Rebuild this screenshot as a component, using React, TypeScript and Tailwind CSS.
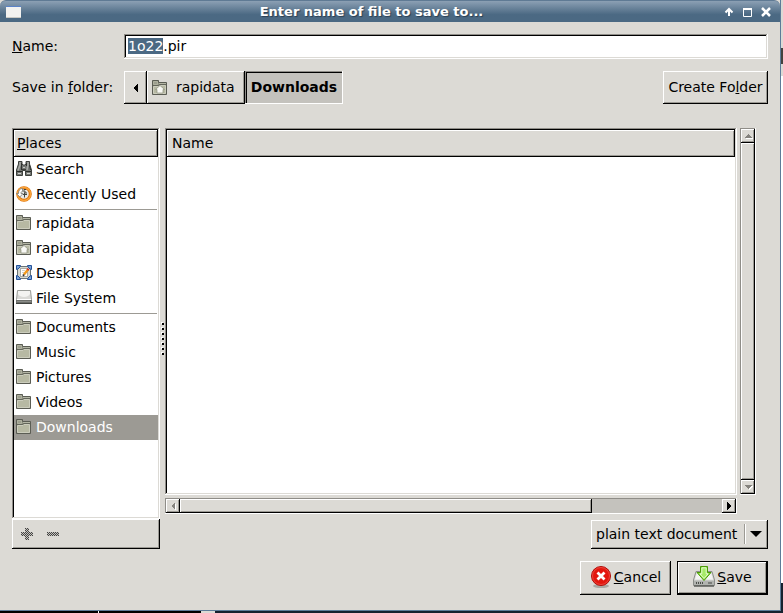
import { useEffect, useRef, useState } from 'react';
import type { ReactNode } from 'react';

const raised = "bg-[#dcdad5] shadow-[inset_-1px_-1px_0_#000,inset_1px_1px_0_#fff,inset_-2px_-2px_0_#9c9a94]";
const sunken = "shadow-[inset_-1px_-1px_0_#fff,inset_1px_1px_0_#8f8d88,inset_-2px_-2px_0_#dcdad5,inset_2px_2px_0_#000]";
const trough = "bg-[#c4c2bd] p-px shadow-[inset_-1px_-1px_0_#fff,inset_1px_1px_0_#8f8d88]";

function FolderIcon({ home = false }: { home?: boolean }) {
    return (
        <svg width="16" height="16" viewBox="0 0 16 16" className="shrink-0" aria-hidden="true">
            <path d="M.5 14.5V.5H6.5V2.5H14.5V14.5Z" fill="#8b8d7e" stroke="#5b5d54" />
            <path d="M1.5 1.5H5.5V4.500H1.500Z" fill="#9c9e8d" stroke="#aeb09f" />
            <path d="M7 3.500H14" stroke="#b4b6a5" />
            <path d="M1 5.500H6.500L7.500 4.500H14" stroke="#64665b" fill="none" />
            <path d="M1.500 13.500V6.500H7L8 5.500H13.500V13.500Z" fill="#b7b9a3" stroke="#cccdbd" />
            {home && <path d="M8 5.500L12.500 9.500H11V13H5V9.500H3.500Z" fill="#f9f9f5" stroke="#8e907f" strokeWidth=".7" />}
        </svg>
    );
}

function SearchIcon() {
    return (
        <svg width="16" height="16" viewBox="0 0 16 16" className="shrink-0" aria-hidden="true">
            <path d="M2.500 .5H6V3L7 4H9L10 3V.5H13.500V3L15.500 9V14.500H9.500V9.500H6.500V14.500H.5V9L2.500 3Z" fill="#747774" stroke="#3d403d" />
            <path d="M4 1V4L2 9.500M12 1V4L11 9" stroke="#a9aca8" strokeWidth="1.500" fill="none" />
            <path d="M5.500 2V9M10.500 2V5M13.500 4L14.500 9" stroke="#303330" />
            <path d="M1 10.500H6M10 10.500H15" stroke="#292c29" />
            <path d="M2 12.500H5M11 12.500H14" stroke="#d0d2cd" />
            <path d="M7 6.500H9" stroke="#c6c8c4" />
            <path d="M6 8.500H10" stroke="#3d403d" />
        </svg>
    );
}

function RecentIcon() {
    return (
        <svg width="16" height="16" viewBox="0 0 16 16" className="shrink-0" aria-hidden="true">
            <circle cx="8" cy="8" r="6.300" fill="#e9e9e6" stroke="#dc7208" strokeWidth="3" />
            <circle cx="8" cy="8" r="6.500" fill="none" stroke="#fba43a" strokeWidth="1.500" />
            <path d="M.5 7.500H2.500C2.500 4 4 2.500 6.500 2.500V5.500C5 5.500 5 6.500 5 7.500H7L3.800 11Z" fill="#fff" stroke="#777975" strokeWidth=".8" />
            <path d="M8 3.500H10M8 3.500V6H10V8M7 8.500H11M8.500 6.500V11.500" stroke="#42453f" fill="none" />
        </svg>
    );
}

function DesktopIcon() {
    return (
        <svg width="16" height="16" viewBox="0 0 16 16" className="shrink-0" aria-hidden="true">
            <rect x="1.500" y="1.500" width="13" height="12" fill="#d6d8cf" stroke="#6b7375" />
            <path d="M.5 .5H4.500L4 2L2 4L.5 4.500ZM15.500 .5H11.500L12 2L14 4L15.500 4.500ZM.5 14.500H4.500L4 13L2 11L.5 10.500ZM15.500 14.500H11.500L12 13L14 11L15.500 10.500Z" fill="#7ba4d8" stroke="#24529a" />
            <rect x="4.500" y="3.500" width="7" height="8" fill="#fff" stroke="#a8aaa5" />
            <path d="M6 5.500H9M6 7.500H8M6 9.500H8" stroke="#d0d2cd" />
            <path d="M8 9.500L12 4.500" stroke="#f39a1c" strokeWidth="2.400" />
            <path d="M11.500 5L12.500 3.800" stroke="#d5302a" strokeWidth="2.400" />
            <path d="M7 11L8.200 9.500" stroke="#333" strokeWidth="1.500" />
        </svg>
    );
}

function DriveIcon() {
    return (
        <svg width="16" height="16" viewBox="0 0 16 16" className="shrink-0" aria-hidden="true">
            <path d="M.5 13.500V9.500L1.500 .5H14.500L15.500 9.500V13.500Z" fill="#d9d9d6" stroke="#9a9c98" />
            <path d="M2 1H14V4C12 8 4 8 2 4Z" fill="#f3f3f1" />
            <path d="M1 9.500H15" stroke="#fff" />
            <path d="M0 10H16V14H0Z" fill="#6d6f6b" />
            <path d="M1 11.500H15" stroke="#8b8d89" />
            <path d="M0 13.500H16" stroke="#41433f" />
        </svg>
    );
}

function CancelIcon() {
    return (
        <svg width="22" height="22" viewBox="0 0 22 22" aria-hidden="true">
            <ellipse cx="11" cy="20" rx="8" ry="2" fill="#aaa8a3" />
            <circle cx="11" cy="10" r="9.500" fill="#e3170f" stroke="#b00d08" />
            <circle cx="11" cy="10" r="8.500" fill="none" stroke="#ee443b" />
            <path d="M7.500 6.500L14.500 13.500M14.500 6.500L7.500 13.500" stroke="#fff" strokeWidth="2.800" />
        </svg>
    );
}

function SaveIcon() {
    return (
        <svg width="22" height="22" viewBox="0 0 22 22" aria-hidden="true">
            <path d="M.5 14L3 5.500H19L21.500 14V19.500H.5Z" fill="#d9dad7" stroke="#8b8d89" />
            <path d="M4 6.500H18L20 13.500H2Z" fill="#f4f4f3" />
            <path d="M1 14.500H21V19H1Z" fill="#b1b3af" />
            <path d="M3 17H11" stroke="#4b4d49" strokeWidth="2" strokeDasharray="1 1" />
            <path d="M15 17H19" stroke="#7b7d79" strokeWidth="2" />
            <path d="M1 20H21" stroke="#5b5d59" strokeWidth="1.500" />
            <path d="M7.500 .5H14.500V6.500H18L11 14.500L4 6.500H7.500Z" fill="#86dc38" stroke="#4b9a06" />
            <path d="M8.800 1.800H13.200V7.800H15.200L11 12.500L6.800 7.800H8.800Z" fill="#a6ea68" stroke="#e8fbd5" />
        </svg>
    );
}

function Triangle({ points, disabled = false }: { points: string; disabled?: boolean }) {
    return (
        <svg width="14" height="14" viewBox="0 0 14 14" shapeRendering="crispEdges" aria-hidden="true">
            {disabled && <polygon points={points} fill="#fff" transform="translate(1 1)" />}
            <polygon points={points} fill={disabled ? "#85837e" : "#000"} />
        </svg>
    );
}

function Stepper({ label, points, disabled }: { label: string; points: string; disabled?: boolean }) {
    return (
        <button type="button" aria-label={label} disabled={disabled} className={`size-3.5 shrink-0 ${raised}`}>
            <Triangle points={points} disabled={disabled} />
        </button>
    );
}

type Place = { name: string; icon: ReactNode };

const groups: Place[][] = [
    [
        { name: "Search", icon: <SearchIcon /> },
        { name: "Recently Used", icon: <RecentIcon /> },
    ],
    [
        { name: "rapidata", icon: <FolderIcon /> },
        { name: "rapidata", icon: <FolderIcon home /> },
        { name: "Desktop", icon: <DesktopIcon /> },
        { name: "File System", icon: <DriveIcon /> },
    ],
    [
        { name: "Documents", icon: <FolderIcon /> },
        { name: "Music", icon: <FolderIcon /> },
        { name: "Pictures", icon: <FolderIcon /> },
        { name: "Videos", icon: <FolderIcon /> },
        { name: "Downloads", icon: <FolderIcon /> },
    ],
];

function TitleBar() {
    return (
        <header className="flex h-[22px] shrink-0 items-center rounded-t-md border-t border-[#5f7a94] bg-linear-to-b from-[#8ca0b4] to-[#4b6983] to-65% pr-2 pl-1.5 text-white">
            <svg width="15" height="14" viewBox="0 0 15 14" aria-hidden="true">
                <rect y="1" width="15" height="12" fill="#f2f2f0" />
                <path d="M0 1.500H15" stroke="#5b83c8" />
                <path d="M0 12.500H15" stroke="#c9c9c4" />
            </svg>
            <h1 className="flex-1 text-center text-[13px] leading-5 font-bold [text-shadow:1px_1px_1px_#2b3f52]">
                Enter name of file to save to...
            </h1>
            <div className="flex gap-1">
                <button aria-label="Shade" className="size-3.5">
                    <svg width="14" height="14" viewBox="0 0 14 14" fill="none" stroke="#fff" strokeWidth="2" aria-hidden="true">
                        <path d="M7 11V4M3.500 7.500L7 4L10.500 7.500" />
                    </svg>
                </button>
                <button aria-label="Maximize" className="size-3.5">
                    <svg width="14" height="14" viewBox="0 0 14 14" fill="none" stroke="#fff" aria-hidden="true">
                        <path d="M3.500 4V11.500H11.500V4" />
                        <path d="M3 4H12" strokeWidth="2" />
                    </svg>
                </button>
                <button aria-label="Close" className="size-3.5">
                    <svg width="14" height="14" viewBox="0 0 14 14" fill="none" stroke="#fff" strokeWidth="2.500" aria-hidden="true">
                        <path d="M4 3L12 11M12 3L4 11" />
                    </svg>
                </button>
            </div>
        </header>
    );
}

function PlacesPanel() {
    const [selected, setSelected] = useState("2-4");

    return (
        <aside className="flex w-37 flex-col">
            <div className={`flex-1 bg-white p-0.5 ${sunken}`}>
                <h2 className={`h-[27px] pl-[3px] leading-[26px] ${raised}`}>
                    <u>P</u>laces
                </h2>
                {groups.map((group, g) => (
                    <div key={g}>
                        {g > 0 && <hr className="mx-px mt-0.5 mb-px border-[#9c9a94]" />}
                        <ul>
                            {group.map((place, i) => (
                                <li key={i}>
                                    <button
                                        type="button"
                                        onClick={() => setSelected(`${g}-${i}`)}
                                        className={`flex h-[25px] w-full items-start gap-1 pt-1 pl-0.5 ${selected === `${g}-${i}` ? "bg-[#9c9a94] text-white" : ""}`}
                                    >
                                        {place.icon}
                                        {place.name}
                                    </button>
                                </li>
                            ))}
                        </ul>
                    </div>
                ))}
            </div>
            {/* Bookmark buttons */}
            <div className={`flex h-[30px] items-center gap-3.5 pl-[9px] ${raised}`}>
                <button type="button" aria-label="Add bookmark" disabled>
                    <svg width="12" height="12" viewBox="0 0 12 12" shapeRendering="crispEdges" aria-hidden="true">
                        <defs>
                            <pattern id="stipple" width="2" height="2" patternUnits="userSpaceOnUse">
                                <rect width="2" height="2" fill="#c4c2bd" />
                                <rect width="1" height="1" fill="#444" />
                                <rect x="1" y="1" width="1" height="1" fill="#444" />
                            </pattern>
                        </defs>
                        <path d="M4 0H8V4H12V8H8V12H4V8H0V4H4Z" fill="url(#stipple)" />
                    </svg>
                </button>
                <button type="button" aria-label="Remove bookmark" disabled>
                    <svg width="12" height="12" viewBox="0 0 12 12" shapeRendering="crispEdges" aria-hidden="true">
                        <path d="M0 4H12V8H0Z" fill="url(#stipple)" />
                    </svg>
                </button>
            </div>
        </aside>
    );
}

function FileList() {
    return (
        <div className="grid flex-1 grid-cols-[1fr_16px] grid-rows-[1fr_16px] gap-[3px] pr-3">
            <div className={`bg-white p-0.5 ${sunken}`}>
                <table className="w-full">
                    <thead>
                        <tr>
                            <th className={`h-[27px] p-0 pl-[5px] text-left font-normal ${raised}`}>Name</th>
                        </tr>
                    </thead>
                </table>
            </div>
            <div className={`flex flex-col ${trough}`}>
                <Stepper label="Scroll up" points="3,9 11,9 7,5" disabled />
                <div className={`flex-1 ${raised}`} />
                <Stepper label="Scroll down" points="3,5 11,5 7,9" disabled />
            </div>
            <div className={`flex ${trough}`}>
                <Stepper label="Scroll left" points="9,3 9,11 5,7" disabled />
                <div className="flex-1">
                    <div className={`h-full w-[76%] ${raised}`} />
                </div>
                <Stepper label="Scroll right" points="5,3 5,11 9,7" />
            </div>
        </div>
    );
}

export default function App() {
    const nameRef = useRef<HTMLInputElement>(null);

    // select the name without its extension
    useEffect(() => {
        nameRef.current?.focus();
        nameRef.current?.setSelectionRange(0, 4);
    }, []);

    return (
        <div className="flex min-h-screen flex-col bg-[#dcdad5] font-['DejaVu_Sans',sans-serif] text-[14px] leading-[17px] text-black">
            <div className="flex flex-1">
                <main className="flex flex-1 flex-col border-r border-b border-[#5d7b98] bg-[#dcdad5]">
                    <TitleBar />
                    <form className="flex flex-1 flex-col px-3 pt-3 pb-[15px]" onSubmit={(e) => e.preventDefault()}>
                        <div className="flex items-center">
                            <label htmlFor="name" className="w-28"><u>N</u>ame:</label>
                            <input
                                id="name"
                                ref={nameRef}
                                defaultValue="1o22.pir"
                                className={`h-[25px] min-w-0 flex-1 bg-white px-1 pb-0.5 leading-[17px] outline-none selection:bg-[#4b6983] selection:text-white ${sunken}`}
                            />
                        </div>

                        {/* Folder path */}
                        <div className="mt-3 flex h-[33px] items-center">
                            <span className="w-28">Save in <u>f</u>older:</span>
                            <button type="button" aria-label="Parent folders" className={`flex h-full w-[23px] items-center justify-center ${raised}`}>
                                <Triangle points="9,2 9,12 4,7" />
                            </button>
                            <button type="button" className={`flex h-full w-[98px] items-center gap-2 pl-[5px] ${raised}`}>
                                <FolderIcon home />
                                rapidata
                            </button>
                            <button type="button" className="h-full w-[98px] bg-[#c4c2bd] font-bold shadow-[inset_-1px_-1px_0_#fff,inset_1px_1px_0_#8f8d88,inset_2px_2px_0_#000]">
                                Downloads
                            </button>
                            <button type="button" className={`ml-auto h-full w-[105px] ${raised}`}>
                                Create Fo<u>l</u>der
                            </button>
                        </div>

                        <div className="mt-6 flex flex-1">
                            <PlacesPanel />
                            {/* Pane handle */}
                            <div className="flex w-[5px] flex-col items-center justify-center gap-[3px]">
                                {[0, 1, 2, 3, 4, 5, 6].map((n) => (
                                    <span key={n} className="size-0.5 bg-black shadow-[-1px_-1px_0_#fff]" />
                                ))}
                            </div>
                            <div className="flex flex-1 flex-col gap-1.5">
                                <FileList />
                                <div className={`relative h-[29px] w-[177px] self-end ${raised}`}>
                                    <select aria-label="File type" className="h-full w-full appearance-none pl-[5px] outline-none">
                                        <option>plain text document</option>
                                    </select>
                                    <div className="pointer-events-none absolute top-1 right-1.5 flex h-5 items-center gap-1">
                                        <div className="h-full w-0.5 border-r border-l border-l-[#9c9a94] border-r-white" />
                                        <svg width="12" height="6" viewBox="0 0 12 6" aria-hidden="true"><path d="M0 0H12L6 6Z" /></svg>
                                    </div>
                                </div>
                            </div>
                        </div>

                        <div className="mt-3 flex h-[34px] justify-end gap-1.5">
                            <button type="button" className={`flex w-[91px] items-center justify-center gap-0.5 pb-0.5 ${raised}`}>
                                <CancelIcon />
                                <span><u>C</u>ancel</span>
                            </button>
                            <button type="submit" className="w-[91px] border border-black">
                                <span className={`flex h-full items-center justify-center gap-0.5 pb-0.5 ${raised}`}>
                                    <SaveIcon />
                                    <span><u>S</u>ave</span>
                                </span>
                            </button>
                        </div>
                    </form>
                </main>
                {/* Slivers of the windows behind */}
                <div className="flex w-0.5 flex-col">
                    <div className="h-12 bg-[#dcdad5]" />
                    <div className="h-4 bg-[#44423e]" />
                    <div className="h-3 bg-[#dcdad5]" />
                    <div className="flex-1 bg-white" />
                    <div className="h-7 bg-[#16202e]" />
                </div>
            </div>
            <div className="flex h-0.5 bg-[#16202e]">
                <div className="w-[98px] bg-black" />
                <div className="w-px bg-white" />
                <div className="w-[102px] bg-black" />
                <div className="w-3.5 bg-[#dcdad5]" />
            </div>
        </div>
    );
}
